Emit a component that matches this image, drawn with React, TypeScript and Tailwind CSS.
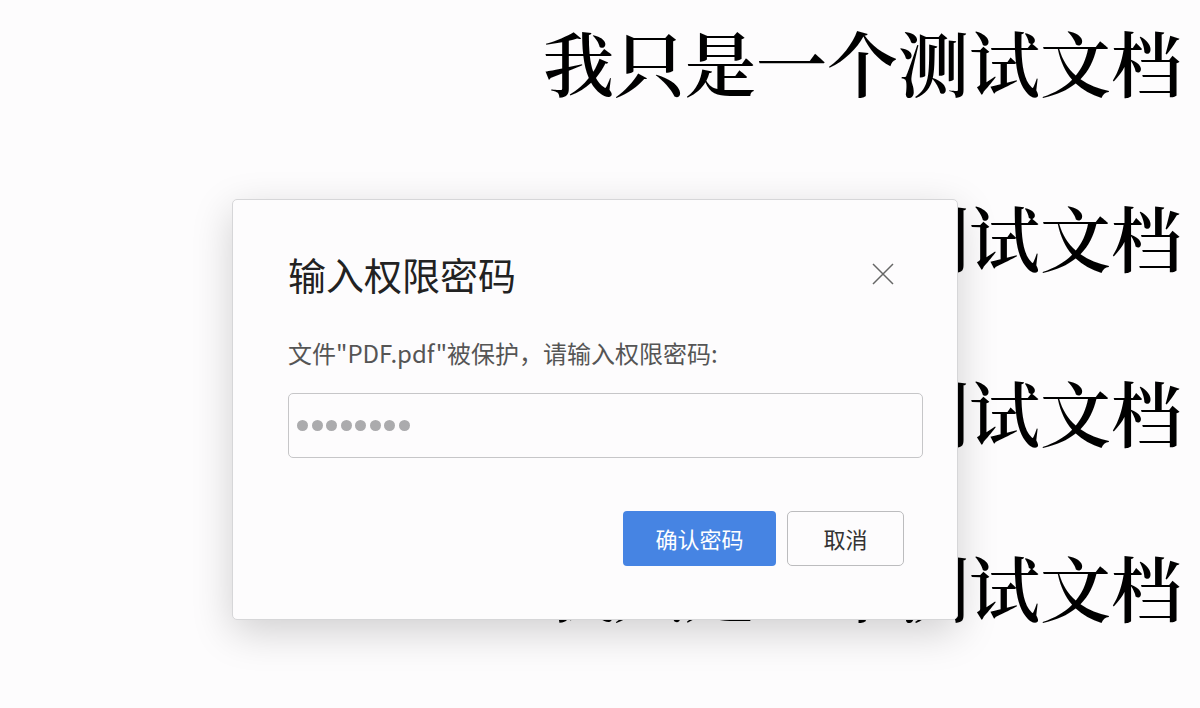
export default function App() {
    const lines = ["我只是一个测试文档", "我只是一个测试文档", "我只是一个测试文档", "我只是一个测试文档"];

    return (
        <div className="relative w-[1200px] h-[708px] overflow-hidden bg-[#fdfcfd]">
            <div
                className="flex flex-col items-end gap-[104px] pt-[25px] pr-[18px] text-[71px] leading-[71px] text-black"
                style={{ fontFamily: '"Noto Serif CJK SC", "Noto Sans CJK SC", serif' }}
            >
                {lines.map((t, i) => (
                    <div key={i} className="font-semibold">{t}</div>
                ))}
            </div>

            <div
                className="absolute left-[232px] top-[199px] w-[726px] h-[421px] rounded-[5px] border border-[#d6d6d8] bg-[#fdfcfd] shadow-[0_12px_40px_rgba(0,0,0,0.18)] px-[55px] pt-[50px]"
                style={{ fontFamily: '"Noto Sans CJK SC", "Noto Sans", sans-serif' }}
            >
                <div className="flex items-center justify-between">
                    <h2 className="text-[38px] leading-[48px] text-[#222]">输入权限密码</h2>
                    <button className="mr-[7px] text-[#666]">
                        <svg width="24" height="24" viewBox="0 0 24 24" fill="none" stroke="currentColor" strokeWidth="1.5">
                            <path d="M2 2 L22 22 M22 2 L2 22" />
                        </svg>
                    </button>
                </div>

                <p className="mt-[39px] text-[24px] leading-[32px] text-[#555]">
                    文件"PDF.pdf"被保护，请输入权限密码:
                </p>

                <div className="mt-[24px] flex h-[65px] w-[635px] items-center gap-[3.5px] rounded-[5px] border border-[#c6c6c8] px-[8px]">
                    {Array.from({ length: 8 }).map((_, i) => (
                        <span key={i} className="h-[11px] w-[11px] rounded-full bg-[#ababad]" />
                    ))}
                </div>

                <div className="mt-[53px] -mr-[2px] flex justify-end gap-[11px]">
                    <button className="h-[55px] w-[153px] rounded-[4px] bg-[#4684e3] text-[22px] text-white">
                        确认密码
                    </button>
                    <button className="h-[55px] w-[117px] rounded-[5px] border border-[#bcbcbe] bg-[#fdfcfd] text-[22px] text-[#333]">
                        取消
                    </button>
                </div>
            </div>
        </div>
    );
}
